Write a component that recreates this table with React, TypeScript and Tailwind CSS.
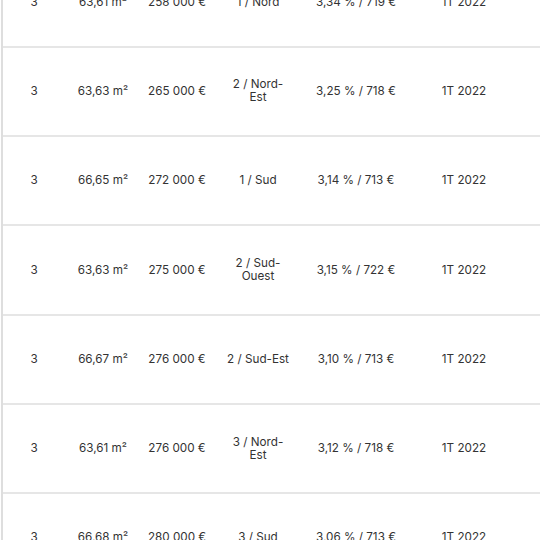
const rows = [
  ['3', '63,61 m²', '258 000 €', '1 / Nord', '3,34 % / 719 €', '1T 2022'],
  ['3', '63,63 m²', '265 000 €', '2 / Nord-Est', '3,25 % / 718 €', '1T 2022'],
  ['3', '66,65 m²', '272 000 €', '1 / Sud', '3,14 % / 713 €', '1T 2022'],
  ['3', '63,63 m²', '275 000 €', '2 / Sud-Ouest', '3,15 % / 722 €', '1T 2022'],
  ['3', '66,67 m²', '276 000 €', '2 / Sud-Est', '3,10 % / 713 €', '1T 2022'],
  ['3', '63,61 m²', '276 000 €', '3 / Nord-Est', '3,12 % / 718 €', '1T 2022'],
  ['3', '66,68 m²', '280 000 €', '3 / Sud', '3,06 % / 713 €', '1T 2022'],
]

const widths = ['w-[62px]', 'w-[76px]', 'w-[72px]', 'w-[90px]', 'w-[106px]', 'w-[110px]']

export default function App() {
  return (
    <div className="h-[540px] w-[540px] overflow-hidden bg-white font-['Inter',sans-serif] text-[11.7px] leading-[13px] text-[#333]">
      <div className="-mt-[41.5px] ml-[1px] w-[600px] border-l-2 border-[#dedede]">
        {rows.map((row, i) => (
          <div key={i} className="flex h-[89.3px] items-center border-b-2 border-[#e6e6e6]">
            {row.map((cell, j) => (
              <div
                key={j}
                className={`${widths[j]} shrink-0 text-center ${j === 3 ? 'px-[12px]' : 'whitespace-nowrap'}`}
              >
                {cell}
              </div>
            ))}
          </div>
        ))}
      </div>
    </div>
  )
}
